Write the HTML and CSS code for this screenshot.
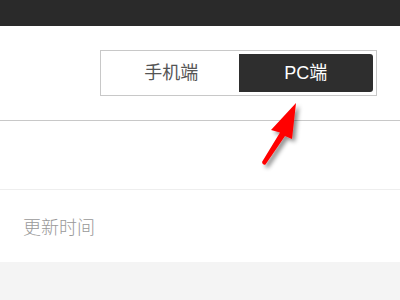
FILE: index.html
```html
<!DOCTYPE html>
<html lang="zh">
<head>
<meta charset="utf-8">
<link rel="stylesheet" href="styles.css">
</head>
<body>
<div class="topbar"></div>
<div class="toolbar">
  <div class="toggle">
    <div class="seg">手机端</div>
    <div class="seg active">PC端</div>
  </div>
</div>
<div class="blank"></div>
<div class="row">更新时间</div>
<div class="footer"></div>
<svg class="arrow" width="400" height="300" viewBox="0 0 400 300">
  <defs>
    <filter id="sh" x="-50%" y="-50%" width="200%" height="200%">
      <feDropShadow dx="3" dy="3" stdDeviation="2" flood-color="#000" flood-opacity="0.45"/>
    </filter>
  </defs>
  <path d="M296 103 L271 130 L280 132.5 L262 162 Q262.5 165.5 265.5 164.5 L285 136 L292 139 Z" fill="#f00" filter="url(#sh)"/>
</svg>
</body>
</html>
```
FILE: styles.css
```css
html, body {
  margin: 0;
  padding: 0;
  width: 400px;
  height: 300px;
  overflow: hidden;
  background: #fff;
  font-family: "Noto Sans CJK SC", "Liberation Sans", sans-serif;
}
.topbar {
  height: 26px;
  background: #2a2a2a;
}
.toolbar {
  display: flex;
  justify-content: flex-end;
  align-items: flex-start;
  box-sizing: border-box;
  height: 95px;
  padding: 24px 23px 0 0;
  border-bottom: 1px solid #c8c8c8;
}
.toggle {
  display: flex;
  width: 277px;
  height: 46px;
  box-sizing: border-box;
  border: 1px solid #c8c8c8;
  padding: 3px;
}
.seg {
  flex: 1;
  display: flex;
  align-items: center;
  justify-content: center;
  font-family: "Liberation Sans", "Noto Sans CJK SC", sans-serif;
  font-size: 18px;
  color: #555;
  line-height: 1;
}
.seg.active {
  background: #2e2e2e;
  color: #fff;
  border-radius: 0 3px 3px 0;
}
.blank {
  height: 68px;
  border-bottom: 1px solid #eeeeee;
}
.row {
  height: 72px;
  display: flex;
  align-items: center;
  padding-left: 23px;
  font-size: 18px;
  font-weight: 300;
  color: #999;
}
.footer {
  height: 40px;
  background: #f4f4f4;
}
.arrow {
  position: absolute;
  left: 0;
  top: 0;
  pointer-events: none;
}
```
